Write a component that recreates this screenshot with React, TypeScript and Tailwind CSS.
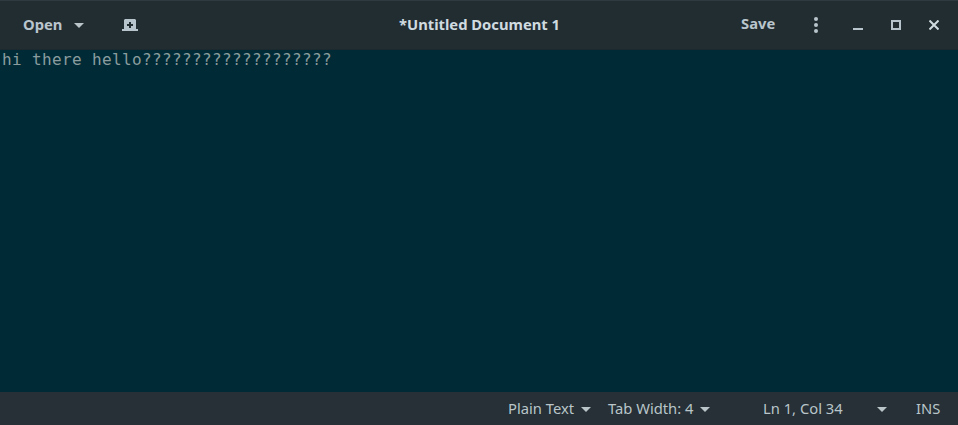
function Caret() {
  return (
    <svg width="10" height="5" viewBox="0 0 10 5" fill="#b9c5c9" className="mt-0.5 shrink-0">
      <path d="M0 0h10L5 5z" />
    </svg>
  );
}

function NewDocumentIcon() {
  return (
    <svg width="16" height="12" viewBox="0 0 16 12" fill="#b9c5cc">
      <path fillRule="evenodd" d="M3 0h10l1 1v9h2v2H0v-2h2V1zM7 3v2H5v2h2v2h2V7h2V5H9V3z" />
    </svg>
  );
}

function HeaderBar() {
  return (
    <header className="flex h-[50px] items-start border-t border-b border-t-[#2e3a40] border-b-[#1c2a30] bg-[#222d32] text-[14.75px] leading-5 font-bold text-[#b9c5cc]">
      <button className="ml-[23px] mt-[13px] flex w-[61px] items-center justify-between">
        <span className="whitespace-nowrap">Open</span>
        <Caret />
      </button>
      <button className="ml-[38px] mt-[18px]">
        <NewDocumentIcon />
      </button>
      <h1 className="ml-[261px] mt-[13px] w-[161px] whitespace-nowrap text-[#d0dbe0]">*Untitled Document 1</h1>
      <button className="ml-[181px] mt-3 w-[35px] whitespace-nowrap text-left">Save</button>
      <button className="ml-[38px] mt-4">
        <svg width="4" height="16" viewBox="0 0 4 16" fill="#b9c5cc">
          <circle cx="2" cy="2" r="2" />
          <circle cx="2" cy="8" r="2" />
          <circle cx="2" cy="14" r="2" />
        </svg>
      </button>
      <button className="ml-[35px] mt-[27px]">
        <svg width="10" height="2" fill="#b9c5cc"><path d="M0 0h10v2H0z" /></svg>
      </button>
      <button className="ml-7 mt-[19px]">
        <svg width="10" height="10" fill="none" stroke="#b9c5cc" strokeWidth="2"><path d="M1 1h8v8H1z" /></svg>
      </button>
      <button className="ml-7 mt-[19px]">
        <svg width="10" height="10" fill="none" stroke="#d0dbe0" strokeWidth="2"><path d="M.5.5l9 9M9.5.5l-9 9" /></svg>
      </button>
    </header>
  );
}

function StatusBar() {
  return (
    <footer className="flex h-[33px] items-center whitespace-nowrap bg-[#263036] pb-px text-[14.75px] leading-5 text-[#b9c5c9]">
      <button className="ml-[508px] flex w-[83px] items-center justify-between">
        <span>Plain Text</span>
        <Caret />
      </button>
      <button className="ml-[17px] flex w-[102px] items-center justify-between">
        <span>Tab Width: 4</span>
        <Caret />
      </button>
      <button className="ml-[53px] flex w-[124px] items-center justify-between">
        <span>Ln 1, Col 34</span>
        <Caret />
      </button>
      <span className="ml-[29px]">INS</span>
    </footer>
  );
}

export default function App() {
  return (
    <div className="flex h-[425px] w-[958px] flex-col overflow-hidden bg-[#002b36] font-['Noto_Sans',sans-serif]">
      <HeaderBar />
      <main className="flex-1 whitespace-pre pl-0.5 font-['DejaVu_Sans_Mono',monospace] text-[16px] leading-[19px] tracking-[0.367px] text-[#8b9c9e]">
        hi there hello???????????????????
      </main>
      <StatusBar />
    </div>
  );
}
